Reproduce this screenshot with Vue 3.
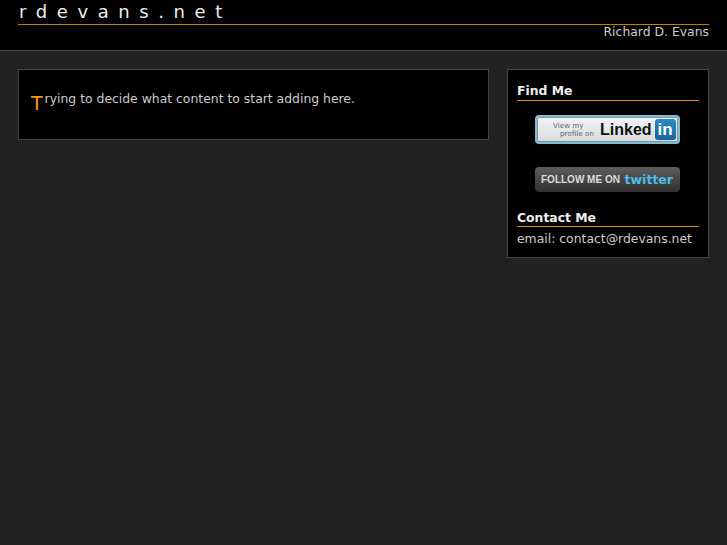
<script setup>
</script>

<template>
  <div class="page">
    <header class="header">
      <div class="brand">rdevans.net</div>
      <div class="owner">Richard D. Evans</div>
    </header>
    <main class="layout">
      <section class="panel content">
        <p class="intro"><span class="drop">T</span>rying to decide what content to start adding here.</p>
      </section>
      <aside class="panel side">
        <h3>Find Me</h3>
        <div class="badge linkedin">
          <span class="view"><span class="view1">View my</span><span class="view2">profile on</span></span>
          <span class="lk">Linked</span><span class="in">in</span>
        </div>
        <div class="badge twitter">
          <span class="follow">FOLLOW ME ON</span><span class="tw">twitter</span>
        </div>
        <h3 class="contact">Contact Me</h3>
        <div class="email">email: contact@rdevans.net</div>
      </aside>
    </main>
  </div>
</template>

<style>
html, body { margin: 0; background: #222; }
</style>

<style scoped>
.page { min-height: 545px; background: #222; font-family: "DejaVu Sans", sans-serif; color: #ccc; font-size: 12.4px; }
.header { background: #000; height: 50px; border-bottom: 1px solid #444; padding: 0 18px; }
.brand { color: #eee; font-size: 18px; letter-spacing: 9.6px; line-height: 23px; padding-left: 1px; border-bottom: 1px solid #c47f00; height: 24px; }
.owner { text-align: right; line-height: 16px; margin-top: -1px; }
.layout { display: flex; justify-content: space-between; align-items: flex-start; padding: 18px 18px 0; }
.panel { background: #000; border: 1px solid #444; box-sizing: border-box; }
.content { width: 471px; height: 71px; padding: 19px 12px; }
.intro { margin: 0; line-height: 20px; }
.drop { float: left; color: #f90; font-size: 19px; line-height: 28px; margin-right: 2px; }
.side { width: 202px; height: 189px; padding: 12px 9px; }
h3 { margin: 0; font-size: 12.4px; color: #eee; font-weight: bold; line-height: 18px; border-bottom: 1px solid #e08a00; }
.badge { width: 145px; margin: 14px auto 0; box-sizing: border-box; display: flex; align-items: center; border-radius: 4px; }
.linkedin { height: 29px; margin-left: 18px; background: linear-gradient(#f2f4f5, #d8dcde); border: 2px solid #7cbdd6; box-shadow: inset 0 0 0 1px #8a9298; padding: 0 3px 0 16px; }
.view { font-size: 7.2px; line-height: 8px; color: #666; width: 47px; flex: none; }
.view1, .view2 { display: block; white-space: nowrap; }
.view2 { padding-left: 7px; }
.lk { font-family: "Liberation Sans", sans-serif; font-weight: bold; font-size: 16px; color: #111; }
.in { margin-left: 3px; width: 21px; height: 21px; flex: none; background: linear-gradient(#2b8cc4, #14649c); color: #fff; font-family: "Liberation Sans", sans-serif; font-weight: bold; font-size: 17px; line-height: 21px; text-align: center; border-radius: 3px; }
.twitter { height: 25px; margin-top: 23px; margin-left: 18px; background: linear-gradient(#5e5e5e, #303030); padding: 0 7px 0 6px; justify-content: space-between; white-space: nowrap; }
.follow { font-family: "Liberation Sans", sans-serif; font-size: 10px; font-weight: bold; color: #ddd; }
.tw { font-size: 12.5px; font-weight: bold; color: #4bbfe8; }
.contact { margin-top: 17px; line-height: 17px; }
.email { margin-top: 2px; line-height: 20px; white-space: nowrap; }
</style>
